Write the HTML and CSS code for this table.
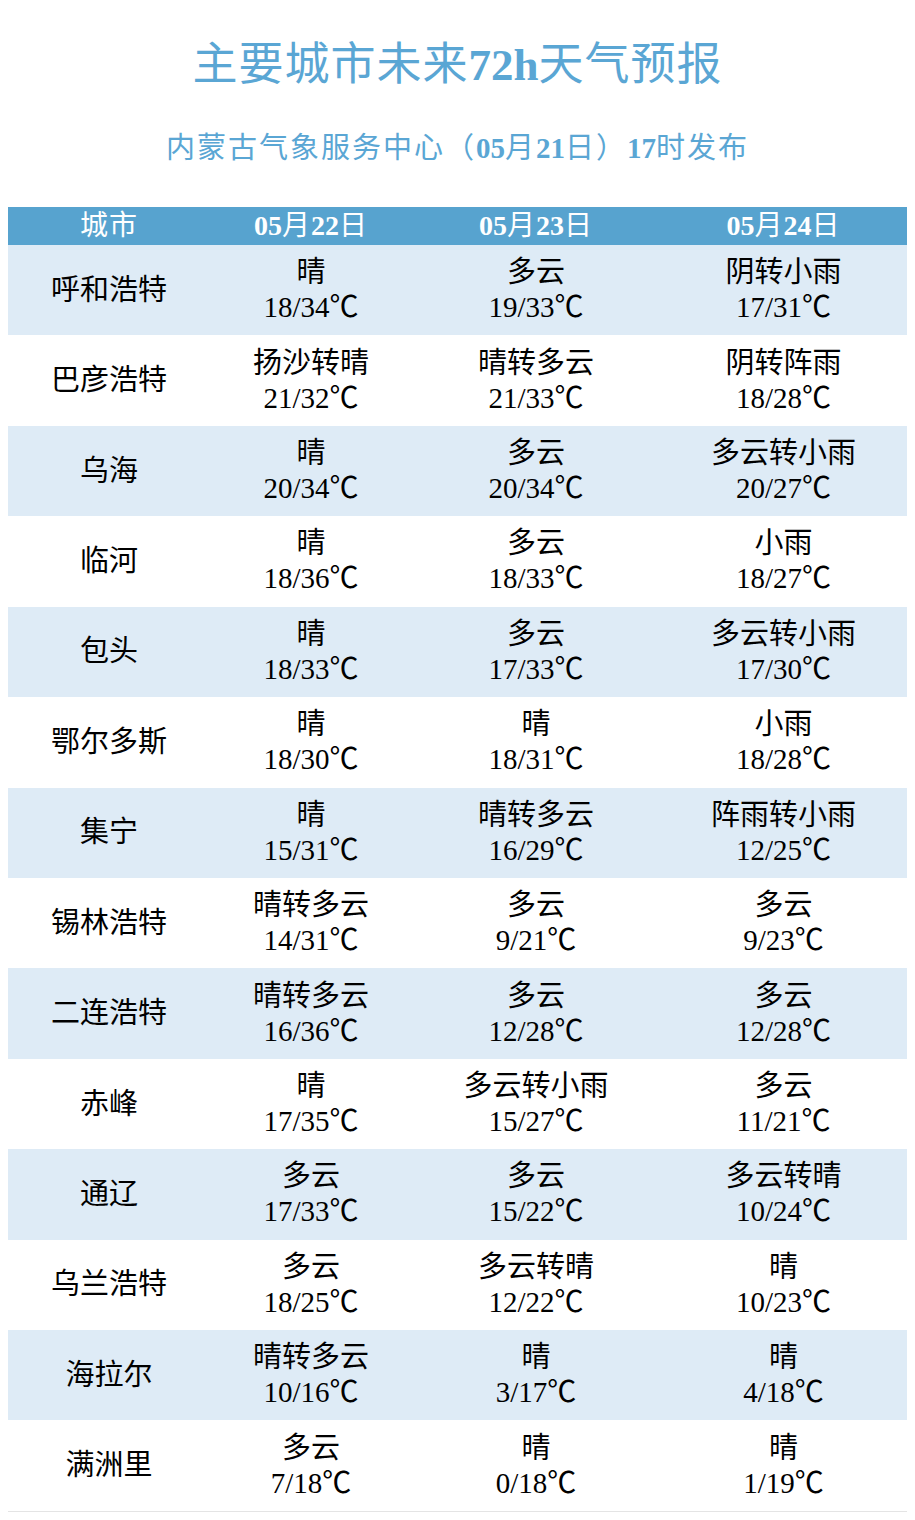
FILE: index.html
```html
<!DOCTYPE html>
<html lang="zh-CN">
<head>
<meta charset="utf-8">
<title>主要城市未来72h天气预报</title>
<link rel="stylesheet" href="styles.css">
</head>
<body>
<header class="head">
  <h1 class="title">主要城市未来<b>72h</b>天气预报</h1>
  <p class="subtitle">内蒙古气象服务中心（<b>05</b>月<b>21</b>日）<b>17</b>时发布</p>
</header>
<table class="forecast">
  <colgroup>
    <col class="c-city"><col class="c-d1"><col class="c-d2"><col class="c-d3">
  </colgroup>
  <thead>
    <tr><th>城市</th><th><b>05</b>月<b>22</b>日</th><th><b>05</b>月<b>23</b>日</th><th><b>05</b>月<b>24</b>日</th></tr>
  </thead>
  <tbody>
    <tr><td class="city">呼和浩特</td><td>晴<br>18/34℃</td><td>多云<br>19/33℃</td><td>阴转小雨<br>17/31℃</td></tr>
    <tr><td class="city">巴彦浩特</td><td>扬沙转晴<br>21/32℃</td><td>晴转多云<br>21/33℃</td><td>阴转阵雨<br>18/28℃</td></tr>
    <tr><td class="city">乌海</td><td>晴<br>20/34℃</td><td>多云<br>20/34℃</td><td>多云转小雨<br>20/27℃</td></tr>
    <tr><td class="city">临河</td><td>晴<br>18/36℃</td><td>多云<br>18/33℃</td><td>小雨<br>18/27℃</td></tr>
    <tr><td class="city">包头</td><td>晴<br>18/33℃</td><td>多云<br>17/33℃</td><td>多云转小雨<br>17/30℃</td></tr>
    <tr><td class="city">鄂尔多斯</td><td>晴<br>18/30℃</td><td>晴<br>18/31℃</td><td>小雨<br>18/28℃</td></tr>
    <tr><td class="city">集宁</td><td>晴<br>15/31℃</td><td>晴转多云<br>16/29℃</td><td>阵雨转小雨<br>12/25℃</td></tr>
    <tr><td class="city">锡林浩特</td><td>晴转多云<br>14/31℃</td><td>多云<br>9/21℃</td><td>多云<br>9/23℃</td></tr>
    <tr><td class="city">二连浩特</td><td>晴转多云<br>16/36℃</td><td>多云<br>12/28℃</td><td>多云<br>12/28℃</td></tr>
    <tr><td class="city">赤峰</td><td>晴<br>17/35℃</td><td>多云转小雨<br>15/27℃</td><td>多云<br>11/21℃</td></tr>
    <tr><td class="city">通辽</td><td>多云<br>17/33℃</td><td>多云<br>15/22℃</td><td>多云转晴<br>10/24℃</td></tr>
    <tr><td class="city">乌兰浩特</td><td>多云<br>18/25℃</td><td>多云转晴<br>12/22℃</td><td>晴<br>10/23℃</td></tr>
    <tr><td class="city">海拉尔</td><td>晴转多云<br>10/16℃</td><td>晴<br>3/17℃</td><td>晴<br>4/18℃</td></tr>
    <tr><td class="city">满洲里</td><td>多云<br>7/18℃</td><td>晴<br>0/18℃</td><td>晴<br>1/19℃</td></tr>
  </tbody>
</table>
</body>
</html>
```
FILE: styles.css
```css
body {
  margin: 8px;
  background: #ffffff;
  font-family: "Liberation Serif", "Noto Sans CJK SC", serif;
  color: #000000;
}
.head {
  text-align: center;
  color: #5aa6d4;
}
.title {
  margin: 0;
  padding-top: 27px;
  font-size: 45px;
  line-height: 60px;
  font-weight: normal;
  letter-spacing: 1px;
}
.title b {
  font-weight: bold;
  letter-spacing: 0;
}
.subtitle {
  margin: 33px 0 0 0;
  font-size: 29px;
  line-height: 40px;
  font-weight: normal;
  letter-spacing: 2px;
}
.subtitle b {
  font-weight: bold;
  letter-spacing: 0;
}
.forecast {
  margin-top: 39px;
  width: 899px;
  border-collapse: collapse;
  table-layout: fixed;
  border-bottom: 1px solid #e4e4e4;
}
.c-city { width: 202px; }
.c-d1 { width: 202px; }
.c-d2 { width: 248px; }
.c-d3 { width: 247px; }
.forecast th {
  height: 38px;
  padding: 0;
  background: #57a3cf;
  color: #ffffff;
  font-size: 28px;
  line-height: 38px;
  font-weight: normal;
  text-align: center;
  letter-spacing: 1px;
}
.forecast th b {
  font-weight: bold;
  letter-spacing: 0;
}
.forecast td {
  height: 90.43px;
  padding: 0;
  text-align: center;
  vertical-align: middle;
  font-size: 29px;
  line-height: 35px;
}
.forecast td.city {
  font-size: 29px;
}
.forecast tbody tr:nth-child(odd) td {
  background: #deebf6;
}
```
